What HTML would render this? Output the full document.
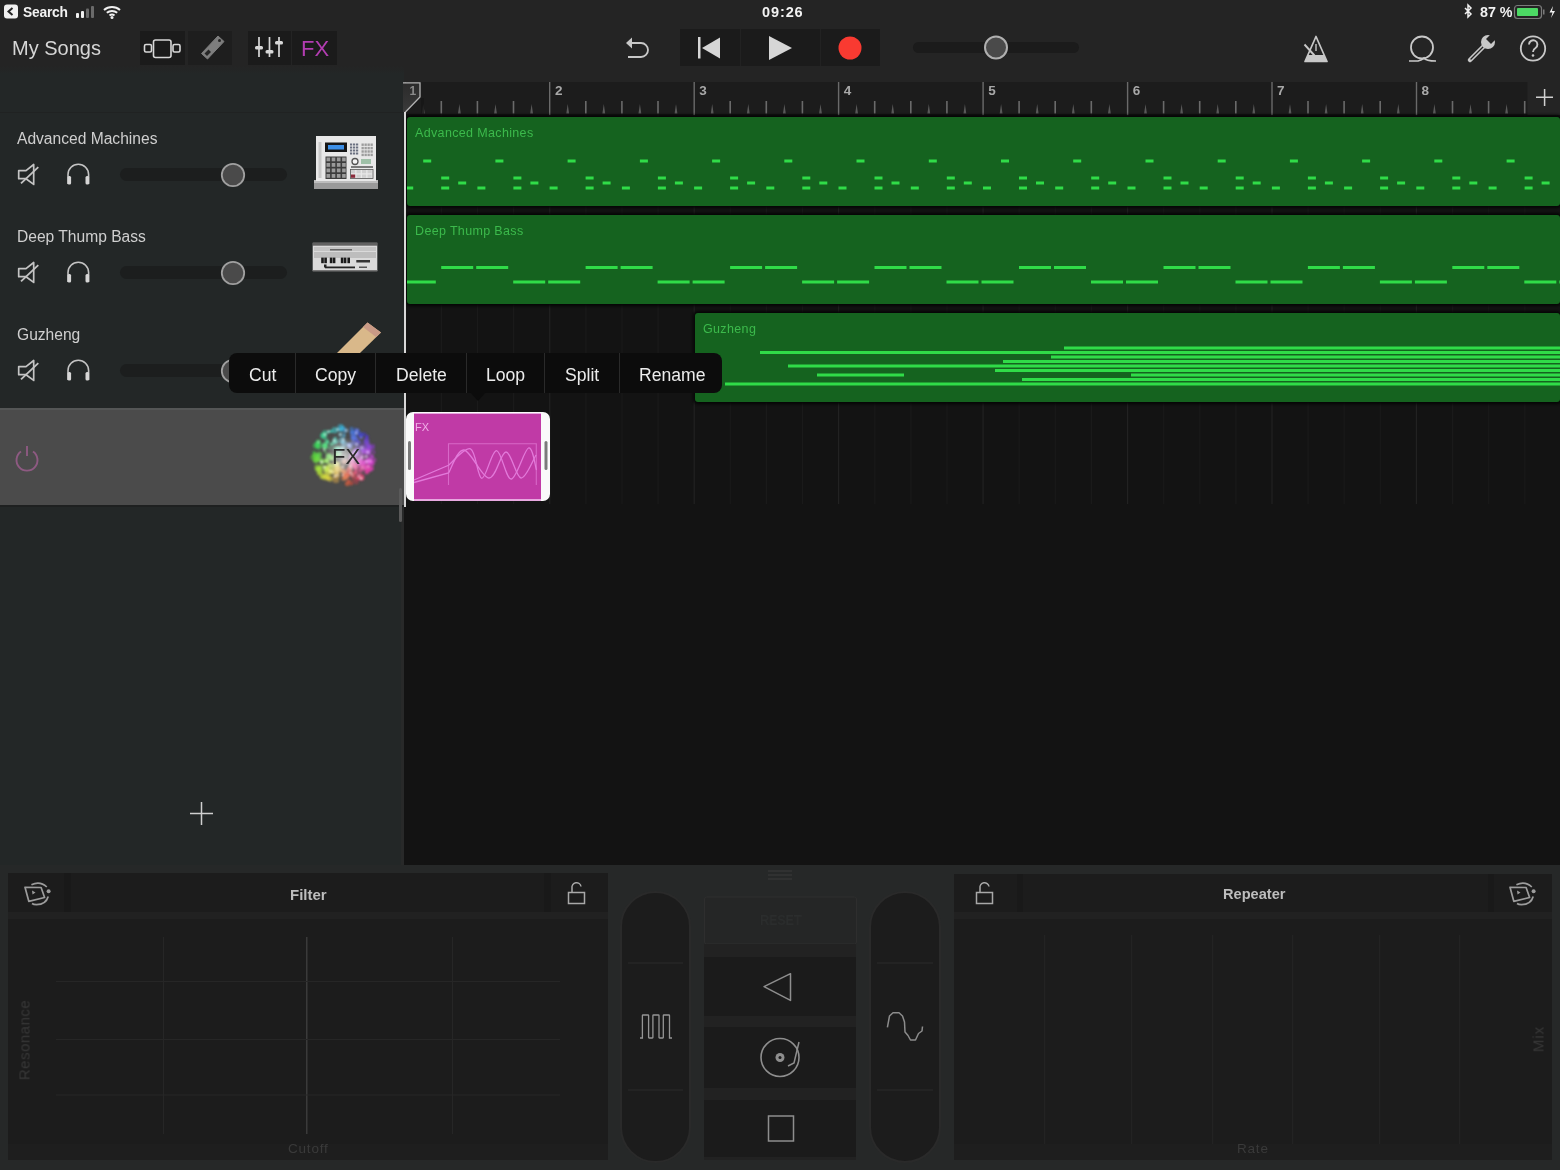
<!DOCTYPE html>
<html><head><meta charset="utf-8">
<style>
*{margin:0;padding:0;box-sizing:border-box}
html,body{width:1560px;height:1170px;overflow:hidden;background:#131313;font-family:"Liberation Sans",sans-serif}
.a{position:absolute}
.t{position:absolute;white-space:nowrap;line-height:1;will-change:transform}
svg{position:absolute;overflow:visible;will-change:transform}
</style></head><body>

<div class="a" style="left:0;top:0;width:1560px;height:82px;background:#242424"></div>
<svg style="left:0;top:0" width="1560" height="24"><rect x="4" y="4.5" width="14" height="14" rx="3" fill="#f0f0f0"/><path d="M12.5 8 L8.5 11.5 L12.5 15" stroke="#242424" stroke-width="2" fill="none"/><rect x="76" y="13" width="3" height="5" rx="1" fill="#f0f0f0"/><rect x="81" y="11" width="3" height="7" rx="1" fill="#f0f0f0"/><rect x="86" y="8.5" width="3" height="9.5" rx="1" fill="#6a6a6a"/><rect x="91" y="6" width="3" height="12" rx="1" fill="#6a6a6a"/><path d="M104 10 A12 12 0 0 1 120 10" stroke="#f0f0f0" stroke-width="2" fill="none"/><path d="M106.8 12.8 A8 8 0 0 1 117.2 12.8" stroke="#f0f0f0" stroke-width="2" fill="none"/><path d="M109.5 15.5 A4 4 0 0 1 114.5 15.5" stroke="#f0f0f0" stroke-width="2" fill="none"/><circle cx="112" cy="17.5" r="1.5" fill="#f0f0f0"/><path d="M1465 8 L1471 14 L1468 17 L1468 5 L1471 8 L1465 14" stroke="#f0f0f0" stroke-width="1.5" fill="none"/><rect x="1514.5" y="5.5" width="27" height="13" rx="3" stroke="#7a7a7a" stroke-width="1.2" fill="none"/><rect x="1517" y="8" width="21" height="8" rx="1" fill="#4cd964"/><rect x="1543" y="9.5" width="1.5" height="5" fill="#7a7a7a"/><path d="M1553 6 L1549.5 12.5 L1552.5 12.5 L1551 18 L1555 11 L1552 11 Z" fill="#f0f0f0"/></svg>
<div class="t" style="left:23px;top:5.5px;font-size:13.8px;font-weight:bold;letter-spacing:-0.2px;color:#f2f2f2">Search</div>
<div class="t" style="left:762px;top:5px;font-size:14.5px;font-weight:bold;letter-spacing:0.9px;color:#f2f2f2">09:26</div>
<div class="t" style="left:1480px;top:4.8px;font-size:14.3px;font-weight:bold;letter-spacing:0px;color:#f2f2f2">87 %</div>
<div class="t" style="left:11.8px;top:38.2px;font-size:20px;color:#d6d6d6">My Songs</div>
<div class="a" style="left:140px;top:31px;width:45px;height:34px;background:#1b1b1b"></div>
<div class="a" style="left:188px;top:31px;width:44px;height:34px;background:#1e1e1e"></div>
<div class="a" style="left:248px;top:31px;width:43px;height:34px;background:#1b1b1b"></div>
<div class="a" style="left:292px;top:31px;width:45px;height:34px;background:#1b1b1b"></div>
<div class="a" style="left:680px;top:29px;width:200px;height:37px;background:#1b1b1b"></div>
<svg style="left:0;top:0" width="1560" height="82"><rect x="153.5" y="40" width="17.5" height="17.5" rx="2" stroke="#d8d8d8" stroke-width="1.6" fill="none"/><rect x="144.5" y="44.5" width="7" height="7.5" rx="1.5" stroke="#d8d8d8" stroke-width="1.6" fill="none"/><rect x="173" y="44.5" width="7" height="7.5" rx="1.5" stroke="#d8d8d8" stroke-width="1.6" fill="none"/><path d="M201.5 53.5 L218 36 L224 41.5 L207.5 59 Z" fill="#7e7e7e" stroke="#7e7e7e" stroke-width="1" stroke-linejoin="round"/><path d="M204.5 53.5 L208.5 49.5 L211 52 L207 56 Z" fill="#262626"/><circle cx="219.5" cy="40.5" r="1.5" fill="#262626"/><path d="M259 37 V57 M269.5 37 V57 M279 37 V57" stroke="#d8d8d8" stroke-width="1.7"/><rect x="255" y="46" width="8" height="3.5" rx="1.5" fill="#d8d8d8"/><rect x="265.5" y="50" width="8" height="3.5" rx="1.5" fill="#d8d8d8"/><rect x="275" y="41" width="8" height="3.5" rx="1.5" fill="#d8d8d8"/><path d="M631 43 H641 A7 7 0 0 1 641 57 H628" stroke="#c8c8c8" stroke-width="1.8" fill="none"/><path d="M626 43 L632 37.5 L632 48.5 Z" fill="#c8c8c8"/><rect x="698" y="37" width="2.5" height="21.5" fill="#d6d6d6"/><path d="M720 37.5 L702 48 L720 58.5 Z" fill="#d6d6d6"/><path d="M769 36 L792 48 L769 60 Z" fill="#d6d6d6"/><circle cx="850" cy="48" r="11.5" fill="#f93a31"/><rect x="913" y="42" width="166" height="11" rx="5.5" fill="#1b1b1b"/><circle cx="996" cy="47.5" r="11" fill="#4a4a4a" stroke="#b0b0b0" stroke-width="2"/><path d="M1305 61.5 L1316 36.5 L1327 61.5 Z" stroke="#c8c8c8" stroke-width="1.7" fill="none" stroke-linejoin="round"/><path d="M1307.8 55 L1324.2 55 L1327 61.5 L1305 61.5 Z" fill="#c8c8c8"/><path d="M1304.5 44.5 L1314.5 55.5" stroke="#c8c8c8" stroke-width="1.9"/><path d="M1316 44 V51" stroke="#c8c8c8" stroke-width="1.4"/><circle cx="1422" cy="47.5" r="11" stroke="#c8c8c8" stroke-width="1.8" fill="none"/><path d="M1409 61 H1418 Q1422 60 1424 58 Q1426 61 1436 61" stroke="#c8c8c8" stroke-width="1.6" fill="none"/><path d="M1470 60 L1484 46" stroke="#c8c8c8" stroke-width="4.5" stroke-linecap="round"/><path d="M1471 59 L1484 46" stroke="#242424" stroke-width="1.4" stroke-linecap="round"/><circle cx="1488" cy="42" r="7" fill="#c8c8c8"/><path d="M1492 33 L1497 38 L1491 44 L1486 39 Z" fill="#242424"/><circle cx="1533" cy="48.5" r="12.2" stroke="#c8c8c8" stroke-width="1.8" fill="none"/><path d="M1529 44.5 A4.2 4.2 0 1 1 1535.5 48 Q1533 49.5 1533 52" stroke="#c8c8c8" stroke-width="1.9" fill="none"/><circle cx="1533" cy="55.5" r="1.3" fill="#c8c8c8"/></svg>
<div class="t" style="left:301px;top:38px;font-size:22px;color:#b33db2">FX</div>
<div class="a" style="left:739.5px;top:29px;width:1px;height:37px;background:#222"></div><div class="a" style="left:819.5px;top:29px;width:1px;height:37px;background:#222"></div>
<div class="a" style="left:0;top:69px;width:404px;height:796px;background:#232727"></div>
<div class="a" style="left:0;top:112px;width:404px;height:1px;background:#202222"></div>
<div class="a" style="left:0;top:66px;width:404px;height:8px;background:linear-gradient(#242424,#232727)"></div>
<div class="a" style="left:0;top:408px;width:404px;height:97px;background:#4b4b4b"></div>
<div class="a" style="left:400.5px;top:505px;width:3.5px;height:360px;background:#282929"></div>
<div class="a" style="left:0;top:408px;width:404px;height:2px;background:#545656"></div>
<div class="a" style="left:0;top:505px;width:404px;height:2px;background:#1e2020"></div>
<div class="t" style="left:17px;top:131.4px;font-size:15.6px;color:#cfcfcf">Advanced Machines</div>
<svg style="left:0;top:114px" width="400" height="98"><path d="M18.7 56.6 H26 L33.7 50.5 V70.4 L26 64.7 H18.7 Z" stroke="#c4c4c4" stroke-width="1.7" fill="none" stroke-linejoin="round"/><path d="M21 69.3 L38.3 53.1" stroke="#c4c4c4" stroke-width="1.8"/><path d="M68 70 V60.5 A10.3 10.3 0 0 1 88.6 60.5 V70" stroke="#c4c4c4" stroke-width="1.6" fill="none"/><rect x="67.5" y="62" width="3.6" height="8.5" rx="1.5" fill="#d6d6d6"/><rect x="85.5" y="62" width="3.6" height="8.5" rx="1.5" fill="#d6d6d6"/><rect x="120" y="54" width="167" height="13" rx="6.5" fill="#1c1e1e"/><circle cx="233" cy="61" r="11.2" fill="#4a4a4a" stroke="#a0a0a0" stroke-width="1.8"/></svg>
<div class="t" style="left:17px;top:229.4px;font-size:15.6px;color:#cfcfcf">Deep Thump Bass</div>
<svg style="left:0;top:212px" width="400" height="98"><path d="M18.7 56.6 H26 L33.7 50.5 V70.4 L26 64.7 H18.7 Z" stroke="#c4c4c4" stroke-width="1.7" fill="none" stroke-linejoin="round"/><path d="M21 69.3 L38.3 53.1" stroke="#c4c4c4" stroke-width="1.8"/><path d="M68 70 V60.5 A10.3 10.3 0 0 1 88.6 60.5 V70" stroke="#c4c4c4" stroke-width="1.6" fill="none"/><rect x="67.5" y="62" width="3.6" height="8.5" rx="1.5" fill="#d6d6d6"/><rect x="85.5" y="62" width="3.6" height="8.5" rx="1.5" fill="#d6d6d6"/><rect x="120" y="54" width="167" height="13" rx="6.5" fill="#1c1e1e"/><circle cx="233" cy="61" r="11.2" fill="#4a4a4a" stroke="#a0a0a0" stroke-width="1.8"/></svg>
<div class="t" style="left:17px;top:327.4px;font-size:15.6px;color:#cfcfcf">Guzheng</div>
<svg style="left:0;top:310px" width="400" height="98"><path d="M18.7 56.6 H26 L33.7 50.5 V70.4 L26 64.7 H18.7 Z" stroke="#c4c4c4" stroke-width="1.7" fill="none" stroke-linejoin="round"/><path d="M21 69.3 L38.3 53.1" stroke="#c4c4c4" stroke-width="1.8"/><path d="M68 70 V60.5 A10.3 10.3 0 0 1 88.6 60.5 V70" stroke="#c4c4c4" stroke-width="1.6" fill="none"/><rect x="67.5" y="62" width="3.6" height="8.5" rx="1.5" fill="#d6d6d6"/><rect x="85.5" y="62" width="3.6" height="8.5" rx="1.5" fill="#d6d6d6"/><rect x="120" y="54" width="167" height="13" rx="6.5" fill="#1c1e1e"/><circle cx="233" cy="61" r="11.2" fill="#4a4a4a" stroke="#a0a0a0" stroke-width="1.8"/></svg>
<svg style="left:300px;top:120px" width="100" height="80"><rect x="14" y="60" width="64" height="9" fill="#9a9a9a"/><rect x="14" y="60" width="64" height="3" fill="#bdbdbd"/><rect x="16" y="16" width="60" height="45" fill="#e8e8e8"/><rect x="25" y="22.5" width="22" height="9.5" fill="#151515"/><rect x="28" y="25" width="16" height="4.5" fill="#3d8fe6"/><rect x="25.5" y="36.5" width="21" height="22.5" fill="#3c3c3c"/><rect x="26.5" y="37.5" width="3.6" height="3.8" fill="#9a9a9a"/><rect x="31.7" y="37.5" width="3.6" height="3.8" fill="#9a9a9a"/><rect x="36.9" y="37.5" width="3.6" height="3.8" fill="#9a9a9a"/><rect x="42.1" y="37.5" width="3.6" height="3.8" fill="#9a9a9a"/><rect x="26.5" y="43.0" width="3.6" height="3.8" fill="#9a9a9a"/><rect x="31.7" y="43.0" width="3.6" height="3.8" fill="#9a9a9a"/><rect x="36.9" y="43.0" width="3.6" height="3.8" fill="#9a9a9a"/><rect x="42.1" y="43.0" width="3.6" height="3.8" fill="#9a9a9a"/><rect x="26.5" y="48.5" width="3.6" height="3.8" fill="#9a9a9a"/><rect x="31.7" y="48.5" width="3.6" height="3.8" fill="#9a9a9a"/><rect x="36.9" y="48.5" width="3.6" height="3.8" fill="#9a9a9a"/><rect x="42.1" y="48.5" width="3.6" height="3.8" fill="#9a9a9a"/><rect x="26.5" y="54.0" width="3.6" height="3.8" fill="#9a9a9a"/><rect x="31.7" y="54.0" width="3.6" height="3.8" fill="#9a9a9a"/><rect x="36.9" y="54.0" width="3.6" height="3.8" fill="#9a9a9a"/><rect x="42.1" y="54.0" width="3.6" height="3.8" fill="#9a9a9a"/><rect x="50.0" y="23.5" width="2.2" height="2" fill="#6a7080"/><rect x="53.0" y="23.5" width="2.2" height="2" fill="#6a7080"/><rect x="56.0" y="23.5" width="2.2" height="2" fill="#6a7080"/><rect x="50.0" y="26.5" width="2.2" height="2" fill="#6a7080"/><rect x="53.0" y="26.5" width="2.2" height="2" fill="#6a7080"/><rect x="56.0" y="26.5" width="2.2" height="2" fill="#6a7080"/><rect x="50.0" y="29.5" width="2.2" height="2" fill="#6a7080"/><rect x="53.0" y="29.5" width="2.2" height="2" fill="#6a7080"/><rect x="56.0" y="29.5" width="2.2" height="2" fill="#6a7080"/><rect x="50.0" y="32.5" width="2.2" height="2" fill="#6a7080"/><rect x="53.0" y="32.5" width="2.2" height="2" fill="#6a7080"/><rect x="56.0" y="32.5" width="2.2" height="2" fill="#6a7080"/><rect x="61.5" y="23.5" width="2.3" height="2.4" fill="#9c9c9c"/><rect x="64.5" y="23.5" width="2.3" height="2.4" fill="#9c9c9c"/><rect x="67.5" y="23.5" width="2.3" height="2.4" fill="#9c9c9c"/><rect x="70.5" y="23.5" width="2.3" height="2.4" fill="#9c9c9c"/><rect x="61.5" y="26.9" width="2.3" height="2.4" fill="#9c9c9c"/><rect x="64.5" y="26.9" width="2.3" height="2.4" fill="#9c9c9c"/><rect x="67.5" y="26.9" width="2.3" height="2.4" fill="#9c9c9c"/><rect x="70.5" y="26.9" width="2.3" height="2.4" fill="#9c9c9c"/><rect x="61.5" y="30.3" width="2.3" height="2.4" fill="#9c9c9c"/><rect x="64.5" y="30.3" width="2.3" height="2.4" fill="#9c9c9c"/><rect x="67.5" y="30.3" width="2.3" height="2.4" fill="#9c9c9c"/><rect x="70.5" y="30.3" width="2.3" height="2.4" fill="#9c9c9c"/><rect x="61.5" y="33.7" width="2.3" height="2.4" fill="#9c9c9c"/><rect x="64.5" y="33.7" width="2.3" height="2.4" fill="#9c9c9c"/><rect x="67.5" y="33.7" width="2.3" height="2.4" fill="#9c9c9c"/><rect x="70.5" y="33.7" width="2.3" height="2.4" fill="#9c9c9c"/><circle cx="55" cy="41.5" r="3" fill="#f4f4f4" stroke="#555" stroke-width="1.3"/><rect x="61" y="39" width="10" height="5" fill="#9fc0a8"/><rect x="51" y="46" width="22" height="2" fill="#7a7a7a"/><rect x="51.0" y="50.0" width="4.2" height="3.3" fill="#d0d0d0"/><rect x="56.5" y="50.0" width="4.2" height="3.3" fill="#d0d0d0"/><rect x="62.0" y="50.0" width="4.2" height="3.3" fill="#d0d0d0"/><rect x="67.5" y="50.0" width="4.2" height="3.3" fill="#d0d0d0"/><rect x="51.0" y="54.5" width="4.2" height="3.3" fill="#8a2a3a"/><rect x="56.5" y="54.5" width="4.2" height="3.3" fill="#d0d0d0"/><rect x="62.0" y="54.5" width="4.2" height="3.3" fill="#d0d0d0"/><rect x="67.5" y="54.5" width="4.2" height="3.3" fill="#d0d0d0"/><rect x="50.5" y="49.5" width="22.5" height="9" fill="none" stroke="#555" stroke-width=".8"/><rect x="18.5" y="22" width="3" height="36" fill="#c8c8c8"/></svg>
<svg style="left:300px;top:230px" width="90" height="50"><rect x="12.7" y="12.7" width="64.6" height="28.2" fill="#dadada"/><rect x="12.7" y="12.7" width="64.6" height="3" fill="#111" opacity=".6"/><rect x="14" y="17" width="62" height="4" fill="#c4c4c4"/><rect x="30" y="19" width="22" height="1.5" fill="#666"/><rect x="14" y="22" width="62" height="6" fill="#bdbdbd"/><rect x="21.2" y="27.6" width="2.6" height="5.6" fill="#1a1a1a"/><rect x="24.3" y="27.6" width="2.6" height="5.6" fill="#1a1a1a"/><rect x="29.8" y="27.6" width="2.6" height="5.6" fill="#1a1a1a"/><rect x="32.8" y="27.6" width="2.6" height="5.6" fill="#1a1a1a"/><rect x="40.8" y="27.6" width="2.6" height="5.6" fill="#1a1a1a"/><rect x="43.8" y="27.6" width="2.6" height="5.6" fill="#1a1a1a"/><rect x="47.4" y="27.6" width="2.6" height="5.6" fill="#1a1a1a"/><rect x="56.3" y="30" width="13.7" height="2.5" fill="#333"/><rect x="25" y="36.5" width="30" height="1.8" fill="#222"/><rect x="24" y="34.5" width="2.5" height="3" fill="#222"/><rect x="59" y="36.5" width="8" height="1.5" fill="#555"/><rect x="12.7" y="40" width="64.6" height="1.5" fill="#777"/></svg>
<svg style="left:0;top:0" width="400" height="400"><path d="M337 353 L367.5 322.5 L381 332.5 L360 353 Z" fill="#d9b88a"/><path d="M367.5 322.5 L381 332.5 L376 337 L363 327 Z" fill="#c99a86"/></svg>
<svg style="left:0;top:408px" width="400" height="97"><path d="M21 43.5 A10.5 10.5 0 1 0 33 43.5" stroke="#8e5a82" stroke-width="1.9" fill="none"/><path d="M27 38 V48" stroke="#8e5a82" stroke-width="1.9"/></svg>
<svg style="left:300px;top:415px" width="90" height="80"><defs><filter id="bl" x="-50%" y="-50%" width="200%" height="200%"><feGaussianBlur stdDeviation="1.1"/></filter><radialGradient id="glow"><stop offset="0" stop-color="#fff" stop-opacity=".7"/><stop offset=".55" stop-color="#fff" stop-opacity=".3"/><stop offset="1" stop-color="#fff" stop-opacity="0"/></radialGradient></defs><g filter="url(#bl)"><circle cx="38.3" cy="51.6" r="2.5" fill="hsl(48,75%,72.11947508882305%)" opacity="0.41"/><circle cx="38.3" cy="51.6" r="1" fill="#fff" opacity=".8"/><circle cx="25.2" cy="37.0" r="1.3" fill="hsl(122,75%,66.16146049865587%)" opacity="0.60"/><circle cx="64.3" cy="45.5" r="1.3" fill="hsl(303,75%,64.65517899899652%)" opacity="0.42"/><circle cx="18.6" cy="53.1" r="1.4" fill="hsl(85,75%,57.574728305801656%)" opacity="0.48"/><circle cx="22.8" cy="20.7" r="2.4" fill="hsl(154,75%,55.75282746549286%)" opacity="0.55"/><circle cx="51.9" cy="39.9" r="2.9" fill="hsl(282,75%,76.5694876548422%)" opacity="0.51"/><circle cx="51.9" cy="39.9" r="1" fill="#fff" opacity=".8"/><circle cx="51.1" cy="49.4" r="1.8" fill="hsl(340,75%,73.32751168754777%)" opacity="0.73"/><circle cx="54.1" cy="61.2" r="2.5" fill="hsl(353,75%,61.725278388107036%)" opacity="0.54"/><circle cx="35.5" cy="38.6" r="1.3" fill="hsl(126,75%,75.71933472518582%)" opacity="0.47"/><circle cx="35.2" cy="23.6" r="1.8" fill="hsl(173,75%,64.78456280782015%)" opacity="0.63"/><circle cx="27.2" cy="45.7" r="2.8" fill="hsl(94,75%,67.75555591978876%)" opacity="0.68"/><circle cx="27.2" cy="45.7" r="1" fill="#fff" opacity=".8"/><circle cx="44.9" cy="63.1" r="2.3" fill="hsl(18,75%,61.85844329047771%)" opacity="0.75"/><circle cx="41.8" cy="25.2" r="3.2" fill="hsl(192,75%,68.05846472051095%)" opacity="0.43"/><circle cx="20.2" cy="53.5" r="1.5" fill="hsl(82,75%,58.68517408060867%)" opacity="0.59"/><circle cx="69.0" cy="46.8" r="2.7" fill="hsl(303,75%,60.17668904961953%)" opacity="0.63"/><circle cx="56.7" cy="29.3" r="2.6" fill="hsl(247,75%,67.40468665137219%)" opacity="0.64"/><circle cx="56.7" cy="29.3" r="1" fill="#fff" opacity=".8"/><circle cx="25.2" cy="31.5" r="2.9" fill="hsl(137,75%,64.18043113607163%)" opacity="0.78"/><circle cx="18.7" cy="44.8" r="1.3" fill="hsl(101,75%,60.24708513238602%)" opacity="0.68"/><circle cx="25.2" cy="17.9" r="2.8" fill="hsl(161,75%,55.09827321093754%)" opacity="0.50"/><circle cx="24.6" cy="56.7" r="1.2" fill="hsl(71,75%,60.169133557979265%)" opacity="0.58"/><circle cx="49.7" cy="50.3" r="1.3" fill="hsl(349,75%,73.35443698548762%)" opacity="0.71"/><circle cx="49.7" cy="50.3" r="1" fill="#fff" opacity=".8"/><circle cx="55.0" cy="51.8" r="2.0" fill="hsl(334,75%,69.1373221243168%)" opacity="0.75"/><circle cx="62.6" cy="50.5" r="2.3" fill="hsl(317,75%,64.32688961769341%)" opacity="0.76"/><circle cx="56.3" cy="16.5" r="1.8" fill="hsl(227,75%,57.0018756163299%)" opacity="0.56"/><circle cx="25.4" cy="62.2" r="3.1" fill="hsl(61,75%,56.695164451690495%)" opacity="0.45"/><circle cx="51.0" cy="53.9" r="1.7" fill="hsl(352,75%,69.57799561450194%)" opacity="0.59"/><circle cx="51.0" cy="53.9" r="1" fill="#fff" opacity=".8"/><circle cx="30.0" cy="32.9" r="1.2" fill="hsl(140,75%,68.72353088264605%)" opacity="0.56"/><circle cx="27.8" cy="57.1" r="3.1" fill="hsl(65,75%,62.009385871369254%)" opacity="0.68"/><circle cx="19.4" cy="38.8" r="2.6" fill="hsl(115,75%,61.069069094168576%)" opacity="0.41"/><circle cx="66.4" cy="25.8" r="2.9" fill="hsl(256,75%,58.31624531245225%)" opacity="0.72"/><circle cx="28.3" cy="52.6" r="1.4" fill="hsl(73,75%,65.40832514210399%)" opacity="0.65"/><circle cx="28.3" cy="52.6" r="1" fill="#fff" opacity=".8"/><circle cx="52.5" cy="44.2" r="1.6" fill="hsl(311,75%,75.49549777908759%)" opacity="0.45"/><circle cx="39.5" cy="47.5" r="1.2" fill="hsl(54,75%,76.24424334998318%)" opacity="0.45"/><circle cx="59.4" cy="51.6" r="1.3" fill="hsl(324,75%,66.20955240747291%)" opacity="0.75"/><circle cx="34.4" cy="33.2" r="1.7" fill="hsl(149,75%,72.19947717259892%)" opacity="0.53"/><circle cx="36.3" cy="49.2" r="2.9" fill="hsl(63,75%,73.13426901908639%)" opacity="0.80"/><circle cx="36.3" cy="49.2" r="1" fill="#fff" opacity=".8"/><circle cx="22.5" cy="45.3" r="1.4" fill="hsl(99,75%,63.61405270473896%)" opacity="0.43"/><circle cx="34.9" cy="53.8" r="2.9" fill="hsl(55,75%,68.669398739271%)" opacity="0.45"/><circle cx="74.2" cy="45.1" r="2.3" fill="hsl(298,75%,55.70506601082322%)" opacity="0.44"/><circle cx="37.5" cy="39.3" r="2.3" fill="hsl(124,75%,77.74637060737344%)" opacity="0.80"/><circle cx="61.1" cy="22.6" r="1.7" fill="hsl(243,75%,59.69750080733481%)" opacity="0.54"/><circle cx="61.1" cy="22.6" r="1" fill="#fff" opacity=".8"/><circle cx="57.7" cy="63.2" r="2.3" fill="hsl(348,75%,58.445435136813884%)" opacity="0.71"/><circle cx="36.7" cy="53.4" r="2.8" fill="hsl(51,75%,69.8350260805682%)" opacity="0.80"/><circle cx="60.9" cy="20.1" r="2.8" fill="hsl(239,75%,57.900692576073%)" opacity="0.70"/><circle cx="47.3" cy="61.8" r="1.9" fill="hsl(11,75%,62.94180720605369%)" opacity="0.39"/><circle cx="60.7" cy="43.7" r="1.7" fill="hsl(299,75%,68.28022991537632%)" opacity="0.68"/><circle cx="60.7" cy="43.7" r="1" fill="#fff" opacity=".8"/><circle cx="64.4" cy="35.7" r="3.1" fill="hsl(275,75%,64.36798259317759%)" opacity="0.80"/><circle cx="62.5" cy="36.0" r="1.6" fill="hsl(275,75%,66.18580330192958%)" opacity="0.48"/><circle cx="48.8" cy="53.9" r="2.4" fill="hsl(359,75%,70.38895894705341%)" opacity="0.77"/><circle cx="55.8" cy="23.9" r="2.5" fill="hsl(235,75%,63.70240387493547%)" opacity="0.72"/><circle cx="66.0" cy="53.0" r="3.0" fill="hsl(319,75%,60.30904220623679%)" opacity="0.71"/><circle cx="66.0" cy="53.0" r="1" fill="#fff" opacity=".8"/><circle cx="44.0" cy="20.7" r="1.6" fill="hsl(200,75%,63.731674281295874%)" opacity="0.72"/><circle cx="30.1" cy="63.6" r="3.1" fill="hsl(52,75%,57.98379795179022%)" opacity="0.55"/><circle cx="19.2" cy="57.4" r="2.6" fill="hsl(77,75%,55.76613457586377%)" opacity="0.45"/><circle cx="53.0" cy="49.5" r="3.0" fill="hsl(334,75%,72.10902088806745%)" opacity="0.73"/><circle cx="61.3" cy="62.0" r="3.2" fill="hsl(340,75%,57.58005665806503%)" opacity="0.66"/><circle cx="61.3" cy="62.0" r="1" fill="#fff" opacity=".8"/><circle cx="30.2" cy="58.5" r="1.5" fill="hsl(58,75%,62.343254282948614%)" opacity="0.39"/><circle cx="69.0" cy="36.7" r="2.3" fill="hsl(280,75%,60.499598529987246%)" opacity="0.78"/><circle cx="17.2" cy="52.0" r="2.9" fill="hsl(88,75%,56.883711788109586%)" opacity="0.47"/><circle cx="43.8" cy="57.1" r="1.7" fill="hsl(21,75%,67.9289933172268%)" opacity="0.63"/><circle cx="42.8" cy="60.0" r="1.5" fill="hsl(24,75%,64.96945177538913%)" opacity="0.77"/><circle cx="42.8" cy="60.0" r="1" fill="#fff" opacity=".8"/><circle cx="31.0" cy="56.8" r="2.4" fill="hsl(60,75%,64.13981062954652%)" opacity="0.77"/><circle cx="17.6" cy="54.3" r="2.2" fill="hsl(83,75%,56.1937531606019%)" opacity="0.61"/><circle cx="37.9" cy="40.2" r="2.1" fill="hsl(118,75%,78.3223087411969%)" opacity="0.46"/><circle cx="72.1" cy="41.6" r="1.5" fill="hsl(291,75%,58.009996116070326%)" opacity="0.58"/><circle cx="40.3" cy="19.5" r="1.9" fill="hsl(190,75%,62.19504458771112%)" opacity="0.60"/><circle cx="40.3" cy="19.5" r="1" fill="#fff" opacity=".8"/><circle cx="17.9" cy="32.2" r="1.4" fill="hsl(129,75%,58.247297447710125%)" opacity="0.62"/><circle cx="44.2" cy="56.7" r="2.7" fill="hsl(19,75%,68.34594266218295%)" opacity="0.60"/><circle cx="18.6" cy="31.4" r="3.0" fill="hsl(131,75%,58.6387865381043%)" opacity="0.57"/><circle cx="26.9" cy="27.5" r="2.2" fill="hsl(148,75%,63.179654676615954%)" opacity="0.68"/><circle cx="22.0" cy="47.3" r="2.2" fill="hsl(94,75%,62.6378092896819%)" opacity="0.78"/><circle cx="22.0" cy="47.3" r="1" fill="#fff" opacity=".8"/><circle cx="34.8" cy="15.2" r="3.1" fill="hsl(180,75%,56.81097623352524%)" opacity="0.49"/><circle cx="15.7" cy="30.7" r="2.9" fill="hsl(130,75%,55.817703711492335%)" opacity="0.44"/><circle cx="59.2" cy="54.5" r="1.3" fill="hsl(332,75%,64.47553109571157%)" opacity="0.48"/><circle cx="67.1" cy="51.6" r="2.8" fill="hsl(315,75%,60.1549679656011%)" opacity="0.76"/><circle cx="59.0" cy="61.3" r="2.5" fill="hsl(344,75%,59.36198699171592%)" opacity="0.44"/><circle cx="59.0" cy="61.3" r="1" fill="#fff" opacity=".8"/><circle cx="66.8" cy="21.8" r="1.6" fill="hsl(250,75%,55.46491529751523%)" opacity="0.79"/><circle cx="26.3" cy="53.2" r="3.2" fill="hsl(75,75%,63.544912966892966%)" opacity="0.74"/><circle cx="55.0" cy="57.4" r="2.2" fill="hsl(346,75%,64.70047534374761%)" opacity="0.53"/><circle cx="50.0" cy="56.8" r="2.6" fill="hsl(359,75%,67.28646049118977%)" opacity="0.39"/><circle cx="24.2" cy="34.5" r="1.2" fill="hsl(128,75%,64.51059882028822%)" opacity="0.52"/><circle cx="24.2" cy="34.5" r="1" fill="#fff" opacity=".8"/><circle cx="27.9" cy="26.3" r="1.3" fill="hsl(152,75%,63.04728347900705%)" opacity="0.80"/><circle cx="51.4" cy="13.2" r="1.4" fill="hsl(215,75%,55.40502884775462%)" opacity="0.50"/><circle cx="70.9" cy="47.3" r="1.7" fill="hsl(303,75%,58.33184654258598%)" opacity="0.44"/><circle cx="17.6" cy="54.0" r="2.8" fill="hsl(84,75%,56.28738483971232%)" opacity="0.49"/><circle cx="61.8" cy="63.4" r="2.3" fill="hsl(342,75%,56.17226610222759%)" opacity="0.68"/><circle cx="61.8" cy="63.4" r="1" fill="#fff" opacity=".8"/><circle cx="51.3" cy="45.3" r="2.6" fill="hsl(320,75%,75.98550057560803%)" opacity="0.56"/><circle cx="71.3" cy="53.4" r="2.5" fill="hsl(314,75%,55.88969827275557%)" opacity="0.72"/><circle cx="69.1" cy="54.5" r="1.3" fill="hsl(318,75%,57.12051865222847%)" opacity="0.75"/><circle cx="26.2" cy="45.9" r="2.3" fill="hsl(95,75%,66.78540991477138%)" opacity="0.78"/><circle cx="42.7" cy="52.0" r="2.3" fill="hsl(27,75%,72.89484373915738%)" opacity="0.48"/><circle cx="42.7" cy="52.0" r="1" fill="#fff" opacity=".8"/><circle cx="54.2" cy="48.8" r="1.3" fill="hsl(327,75%,71.75732413592031%)" opacity="0.47"/><circle cx="37.3" cy="56.2" r="2.7" fill="hsl(44,75%,67.62320700429717%)" opacity="0.51"/><circle cx="30.2" cy="41.0" r="1.9" fill="hsl(110,75%,71.21557484395127%)" opacity="0.39"/><circle cx="44.0" cy="46.4" r="2.7" fill="hsl(20,75%,78.57155979271411%)" opacity="0.62"/><circle cx="52.1" cy="59.8" r="3.1" fill="hsl(357,75%,63.79831138113583%)" opacity="0.43"/><circle cx="52.1" cy="59.8" r="1" fill="#fff" opacity=".8"/><circle cx="52.8" cy="23.5" r="2.2" fill="hsl(227,75%,64.6864782431634%)" opacity="0.74"/><circle cx="26.4" cy="54.0" r="2.6" fill="hsl(74,75%,63.157245190540564%)" opacity="0.80"/><circle cx="28.3" cy="63.1" r="2.6" fill="hsl(55,75%,57.490116499167826%)" opacity="0.65"/><circle cx="28.5" cy="50.8" r="1.3" fill="hsl(78,75%,66.58547859284272%)" opacity="0.44"/><circle cx="68.4" cy="51.8" r="1.7" fill="hsl(314,75%,58.951126585045685%)" opacity="0.45"/><circle cx="68.4" cy="51.8" r="1" fill="#fff" opacity=".8"/><circle cx="68.8" cy="54.5" r="2.9" fill="hsl(319,75%,57.35085236894514%)" opacity="0.67"/><circle cx="40.8" cy="55.4" r="1.8" fill="hsl(32,75%,69.28786025290924%)" opacity="0.58"/><circle cx="55.6" cy="57.4" r="1.7" fill="hsl(345,75%,64.39745614431422%)" opacity="0.79"/><circle cx="67.0" cy="37.3" r="1.7" fill="hsl(281,75%,62.37346691026687%)" opacity="0.79"/><circle cx="37.0" cy="57.4" r="1.2" fill="hsl(43,75%,66.37305095245954%)" opacity="0.54"/><circle cx="37.0" cy="57.4" r="1" fill="#fff" opacity=".8"/><circle cx="21.9" cy="44.3" r="1.6" fill="hsl(102,75%,63.234932247274%)" opacity="0.60"/><circle cx="60.5" cy="41.5" r="1.4" fill="hsl(292,75%,68.6852180079503%)" opacity="0.55"/><circle cx="50.2" cy="42.5" r="1.8" fill="hsl(304,75%,78.05363757832178%)" opacity="0.48"/><circle cx="24.3" cy="30.1" r="2.7" fill="hsl(139,75%,62.71696821615362%)" opacity="0.66"/><circle cx="37.8" cy="14.4" r="2.0" fill="hsl(187,75%,56.77227575017751%)" opacity="0.52"/><circle cx="37.8" cy="14.4" r="1" fill="#fff" opacity=".8"/><circle cx="56.7" cy="39.9" r="2.6" fill="hsl(285,75%,72.16764866234762%)" opacity="0.66"/><circle cx="71.6" cy="48.2" r="3.0" fill="hsl(305,75%,57.44347658780407%)" opacity="0.65"/><circle cx="41.1" cy="14.9" r="1.5" fill="hsl(194,75%,57.80392040873595%)" opacity="0.61"/><circle cx="15.3" cy="40.3" r="2.8" fill="hsl(111,75%,57.44893851916786%)" opacity="0.73"/><circle cx="18.4" cy="27.2" r="2.6" fill="hsl(138,75%,56.56512416374568%)" opacity="0.68"/><circle cx="18.4" cy="27.2" r="1" fill="#fff" opacity=".8"/><circle cx="44.9" cy="47.5" r="1.5" fill="hsl(12,75%,77.48065321084334%)" opacity="0.54"/><circle cx="66.7" cy="57.3" r="2.3" fill="hsl(326,75%,57.43522790515341%)" opacity="0.65"/><circle cx="25.8" cy="23.9" r="2.2" fill="hsl(153,75%,59.962325390290125%)" opacity="0.38"/><circle cx="52.0" cy="17.0" r="2.2" fill="hsl(218,75%,58.83007046432243%)" opacity="0.61"/><circle cx="39.1" cy="33.9" r="2.7" fill="hsl(165,75%,75.55859119630063%)" opacity="0.49"/><circle cx="39.1" cy="33.9" r="1" fill="#fff" opacity=".8"/><circle cx="58.8" cy="47.9" r="2.7" fill="hsl(315,75%,68.64787390720738%)" opacity="0.47"/><circle cx="42.0" cy="12.4" r="2.2" fill="hsl(196,75%,55.34687888104297%)" opacity="0.55"/><circle cx="18.2" cy="44.2" r="2.7" fill="hsl(103,75%,59.91039574737634%)" opacity="0.64"/><circle cx="37.9" cy="34.0" r="1.5" fill="hsl(159,75%,75.01831172828955%)" opacity="0.49"/><circle cx="43.2" cy="24.7" r="2.3" fill="hsl(197,75%,67.6380161116312%)" opacity="0.39"/><circle cx="43.2" cy="24.7" r="1" fill="#fff" opacity=".8"/><circle cx="59.5" cy="46.7" r="2.5" fill="hsl(310,75%,68.56182853741473%)" opacity="0.68"/><circle cx="36.2" cy="26.7" r="2.2" fill="hsl(171,75%,67.9831934396423%)" opacity="0.58"/><circle cx="32.7" cy="43.2" r="3.0" fill="hsl(99,75%,73.30010797337758%)" opacity="0.47"/><circle cx="74.0" cy="37.2" r="1.2" fill="hsl(283,75%,55.92043264707887%)" opacity="0.58"/><circle cx="57.1" cy="15.2" r="2.1" fill="hsl(227,75%,55.456779108771315%)" opacity="0.50"/><circle cx="57.1" cy="15.2" r="1" fill="#fff" opacity=".8"/><circle cx="51.6" cy="68.3" r="1.6" fill="hsl(4,75%,55.783796820422275%)" opacity="0.63"/><circle cx="58.4" cy="57.5" r="3.1" fill="hsl(339,75%,62.81641014904624%)" opacity="0.44"/><circle cx="53.6" cy="22.1" r="3.0" fill="hsl(227,75%,63.11658741033324%)" opacity="0.68"/><circle cx="47.5" cy="68.3" r="2.2" fill="hsl(13,75%,56.49198152901708%)" opacity="0.39"/><circle cx="66.2" cy="41.5" r="2.1" fill="hsl(291,75%,63.45575264177852%)" opacity="0.51"/><circle cx="66.2" cy="41.5" r="1" fill="#fff" opacity=".8"/><circle cx="55.9" cy="54.4" r="1.8" fill="hsl(338,75%,66.67068744920954%)" opacity="0.74"/><circle cx="71.2" cy="41.3" r="2.9" fill="hsl(291,75%,58.789685006875146%)" opacity="0.43"/><circle cx="67.8" cy="30.0" r="3.0" fill="hsl(265,75%,59.41382985378755%)" opacity="0.51"/><circle cx="30.2" cy="54.3" r="3.2" fill="hsl(66,75%,65.54356988227036%)" opacity="0.63"/><circle cx="30.7" cy="55.8" r="1.8" fill="hsl(62,75%,64.77469072705844%)" opacity="0.40"/><circle cx="30.7" cy="55.8" r="1" fill="#fff" opacity=".8"/><circle cx="67.0" cy="56.8" r="1.8" fill="hsl(325,75%,57.45299901042865%)" opacity="0.78"/><circle cx="44.1" cy="56.4" r="2.2" fill="hsl(20,75%,68.6433169146387%)" opacity="0.46"/><circle cx="22.6" cy="61.3" r="3.0" fill="hsl(67,75%,55.62972880100319%)" opacity="0.73"/><circle cx="23.6" cy="20.7" r="3.1" fill="hsl(155,75%,56.25751093419561%)" opacity="0.62"/><circle cx="42.4" cy="33.5" r="2.7" fill="hsl(188,75%,76.41072084663509%)" opacity="0.57"/><circle cx="42.4" cy="33.5" r="1" fill="#fff" opacity=".8"/><circle cx="44.4" cy="17.6" r="1.8" fill="hsl(201,75%,60.59067805952657%)" opacity="0.40"/><circle cx="54.7" cy="36.1" r="2.1" fill="hsl(265,75%,72.96607757708264%)" opacity="0.53"/><circle cx="36.0" cy="64.9" r="3.2" fill="hsl(38,75%,58.981690505395676%)" opacity="0.49"/><circle cx="34.2" cy="27.5" r="2.3" fill="hsl(164,75%,67.7284526135833%)" opacity="0.55"/><circle cx="50.6" cy="51.6" r="1.6" fill="hsl(348,75%,71.7503292105126%)" opacity="0.77"/><circle cx="50.6" cy="51.6" r="1" fill="#fff" opacity=".8"/><circle cx="28.8" cy="41.3" r="3.0" fill="hsl(109,75%,69.92305386958319%)" opacity="0.81"/><circle cx="32.2" cy="44.6" r="1.6" fill="hsl(93,75%,72.51643417629825%)" opacity="0.42"/><circle cx="38.3" cy="49.0" r="1.7" fill="hsl(55,75%,74.41364861054701%)" opacity="0.49"/><circle cx="17.2" cy="29.4" r="2.7" fill="hsl(133,75%,56.64904192440207%)" opacity="0.56"/><circle cx="24.4" cy="51.9" r="2.0" fill="hsl(81,75%,62.81441764094191%)" opacity="0.53"/><circle cx="24.4" cy="51.9" r="1" fill="#fff" opacity=".8"/><circle cx="59.7" cy="47.0" r="3.1" fill="hsl(311,75%,68.33017476636908%)" opacity="0.44"/><circle cx="19.0" cy="40.5" r="2.9" fill="hsl(111,75%,60.853814498710456%)" opacity="0.47"/><circle cx="41.9" cy="55.8" r="2.0" fill="hsl(28,75%,69.11408286123904%)" opacity="0.57"/><circle cx="71.7" cy="33.4" r="2.9" fill="hsl(275,75%,57.236440590317315%)" opacity="0.39"/><circle cx="69.9" cy="45.9" r="3.0" fill="hsl(301,75%,59.47276161263279%)" opacity="0.58"/><circle cx="69.9" cy="45.9" r="1" fill="#fff" opacity=".8"/><circle cx="40.2" cy="38.9" r="2.0" fill="hsl(139,75%,79.88086526962603%)" opacity="0.78"/><circle cx="57.3" cy="17.1" r="3.1" fill="hsl(229,75%,57.13226420957258%)" opacity="0.49"/><circle cx="54.0" cy="48.6" r="2.2" fill="hsl(327,75%,71.9976844838672%)" opacity="0.67"/><circle cx="68.9" cy="32.1" r="2.5" fill="hsl(270,75%,59.26824328012306%)" opacity="0.71"/><circle cx="21.4" cy="46.8" r="1.3" fill="hsl(96,75%,62.28926477580463%)" opacity="0.71"/><circle cx="21.4" cy="46.8" r="1" fill="#fff" opacity=".8"/><circle cx="47.3" cy="68.7" r="2.5" fill="hsl(13,75%,56.16118257106615%)" opacity="0.51"/><circle cx="55.2" cy="51.8" r="2.5" fill="hsl(334,75%,69.02189813526647%)" opacity="0.68"/><circle cx="51.1" cy="46.6" r="2.2" fill="hsl(328,75%,75.35114829408246%)" opacity="0.63"/><circle cx="32.3" cy="50.2" r="2.4" fill="hsl(72,75%,69.81928546790668%)" opacity="0.39"/><circle cx="37.2" cy="59.9" r="3.1" fill="hsl(40,75%,64.08739090342192%)" opacity="0.66"/><circle cx="37.2" cy="59.9" r="1" fill="#fff" opacity=".8"/><circle cx="60.3" cy="27.5" r="1.7" fill="hsl(250,75%,63.78722601681629%)" opacity="0.49"/><circle cx="69.6" cy="35.0" r="1.8" fill="hsl(277,75%,59.55452074887289%)" opacity="0.39"/><circle cx="18.2" cy="41.3" r="2.0" fill="hsl(109,75%,60.068866903386976%)" opacity="0.49"/><circle cx="29.0" cy="16.8" r="1.7" fill="hsl(168,75%,56.08371351289716%)" opacity="0.40"/><circle cx="33.2" cy="57.2" r="2.6" fill="hsl(54,75%,64.93604077532602%)" opacity="0.47"/><circle cx="33.2" cy="57.2" r="1" fill="#fff" opacity=".8"/><circle cx="51.9" cy="17.1" r="2.2" fill="hsl(218,75%,58.98009748214153%)" opacity="0.47"/><circle cx="61.5" cy="37.9" r="2.8" fill="hsl(280,75%,67.4552159031523%)" opacity="0.48"/><circle cx="48.9" cy="66.0" r="1.8" fill="hsl(9,75%,58.63102733212574%)" opacity="0.79"/><circle cx="29.9" cy="41.3" r="1.6" fill="hsl(109,75%,70.91566570157181%)" opacity="0.56"/><circle cx="28.5" cy="16.6" r="1.5" fill="hsl(168,75%,55.73747903547195%)" opacity="0.55"/><circle cx="28.5" cy="16.6" r="1" fill="#fff" opacity=".8"/><circle cx="51.1" cy="68.9" r="1.5" fill="hsl(6,75%,55.37012088024794%)" opacity="0.40"/><circle cx="62.5" cy="47.8" r="3.0" fill="hsl(310,75%,65.53414297544481%)" opacity="0.76"/><circle cx="40.6" cy="12.2" r="3.1" fill="hsl(193,75%,55.03512273579619%)" opacity="0.52"/><circle cx="56.0" cy="66.8" r="2.7" fill="hsl(355,75%,55.92590416152039%)" opacity="0.40"/><circle cx="34.0" cy="25.4" r="1.9" fill="hsl(167,75%,65.8652115929907%)" opacity="0.52"/><circle cx="34.0" cy="25.4" r="1" fill="#fff" opacity=".8"/><circle cx="46.3" cy="44.8" r="1.8" fill="hsl(349,75%,79.61981810179626%)" opacity="0.53"/><circle cx="55.3" cy="38.0" r="3.1" fill="hsl(275,75%,73.10147294544412%)" opacity="0.47"/><circle cx="26.3" cy="61.6" r="2.8" fill="hsl(61,75%,57.65717281749311%)" opacity="0.57"/><circle cx="64.8" cy="47.1" r="1.9" fill="hsl(306,75%,63.82477753690431%)" opacity="0.77"/><circle cx="50.7" cy="57.7" r="3.0" fill="hsl(358,75%,66.19475842878869%)" opacity="0.40"/><circle cx="50.7" cy="57.7" r="1" fill="#fff" opacity=".8"/><circle cx="20.0" cy="54.9" r="2.7" fill="hsl(80,75%,57.81012525546522%)" opacity="0.40"/><circle cx="52.7" cy="42.8" r="3.0" fill="hsl(302,75%,75.72974379841926%)" opacity="0.49"/><circle cx="43.5" cy="13.5" r="1.9" fill="hsl(199,75%,56.47930935765564%)" opacity="0.50"/><circle cx="67.9" cy="35.0" r="1.7" fill="hsl(276,75%,61.08011070974098%)" opacity="0.69"/><circle cx="37.2" cy="55.3" r="1.2" fill="hsl(46,75%,68.37985265274885%)" opacity="0.70"/><circle cx="37.2" cy="55.3" r="1" fill="#fff" opacity=".8"/><circle cx="65.7" cy="29.4" r="3.1" fill="hsl(262,75%,60.77644145048579%)" opacity="0.39"/><circle cx="46.2" cy="61.1" r="3.1" fill="hsl(14,75%,63.789574034628004%)" opacity="0.79"/><circle cx="31.8" cy="50.8" r="2.1" fill="hsl(71,75%,69.04246782412301%)" opacity="0.59"/><circle cx="56.6" cy="35.3" r="2.8" fill="hsl(266,75%,71.05415681443728%)" opacity="0.70"/><circle cx="56.2" cy="18.1" r="2.4" fill="hsl(228,75%,58.43138574832727%)" opacity="0.52"/><circle cx="56.2" cy="18.1" r="1" fill="#fff" opacity=".8"/><circle cx="35.9" cy="57.1" r="2.8" fill="hsl(47,75%,66.25016930359511%)" opacity="0.42"/><circle cx="52.9" cy="64.9" r="1.7" fill="hsl(360,75%,58.7545387832632%)" opacity="0.41"/><circle cx="66.9" cy="45.6" r="1.9" fill="hsl(301,75%,62.26851470302239%)" opacity="0.80"/><circle cx="67.2" cy="21.7" r="1.7" fill="hsl(250,75%,55.17354264094268%)" opacity="0.42"/><circle cx="62.4" cy="52.8" r="2.6" fill="hsl(323,75%,63.32021889121119%)" opacity="0.57"/><circle cx="62.4" cy="52.8" r="1" fill="#fff" opacity=".8"/><circle cx="46.0" cy="59.9" r="2.4" fill="hsl(14,75%,65.01654110964218%)" opacity="0.67"/><circle cx="43.6" cy="14.3" r="2.5" fill="hsl(199,75%,57.26257665752772%)" opacity="0.43"/><circle cx="53.4" cy="27.5" r="2.3" fill="hsl(235,75%,67.90809614108662%)" opacity="0.54"/><circle cx="42.9" cy="27.6" r="1.7" fill="hsl(195,75%,70.54680375858975%)" opacity="0.49"/><circle cx="60.8" cy="63.4" r="2.4" fill="hsl(343,75%,56.695541875045464%)" opacity="0.52"/><circle cx="60.8" cy="63.4" r="1" fill="#fff" opacity=".8"/><circle cx="19.2" cy="58.6" r="2.2" fill="hsl(75,75%,55.10750285072015%)" opacity="0.48"/><circle cx="53.1" cy="19.0" r="3.2" fill="hsl(223,75%,60.4356481586377%)" opacity="0.43"/><circle cx="15.9" cy="45.2" r="2.9" fill="hsl(102,75%,57.695854538978274%)" opacity="0.77"/><circle cx="60.8" cy="45.0" r="1.4" fill="hsl(303,75%,67.91077709102326%)" opacity="0.46"/><circle cx="67.7" cy="37.2" r="3.1" fill="hsl(281,75%,61.69581569121139%)" opacity="0.54"/><circle cx="67.7" cy="37.2" r="1" fill="#fff" opacity=".8"/><circle cx="58.2" cy="26.3" r="1.7" fill="hsl(244,75%,64.32843017713427%)" opacity="0.71"/><circle cx="54.4" cy="37.6" r="2.4" fill="hsl(272,75%,73.80187214266093%)" opacity="0.65"/><circle cx="47.9" cy="58.5" r="1.5" fill="hsl(7,75%,66.09183941345681%)" opacity="0.47"/><circle cx="43.2" cy="63.6" r="2.5" fill="hsl(22,75%,61.397948047201766%)" opacity="0.47"/><circle cx="62.2" cy="42.2" r="2.6" fill="hsl(294,75%,67.07273583738207%)" opacity="0.46"/><circle cx="62.2" cy="42.2" r="1" fill="#fff" opacity=".8"/><circle cx="38.4" cy="53.6" r="2.8" fill="hsl(44,75%,70.4182247984393%)" opacity="0.62"/><circle cx="54.0" cy="44.9" r="2.0" fill="hsl(311,75%,73.9809296744929%)" opacity="0.62"/><circle cx="37.4" cy="33.6" r="1.5" fill="hsl(158,75%,74.41114456696609%)" opacity="0.68"/><circle cx="29.6" cy="49.5" r="1.8" fill="hsl(79,75%,68.17877443124752%)" opacity="0.79"/><circle cx="34.9" cy="61.3" r="1.9" fill="hsl(44,75%,62.00603477054339%)" opacity="0.56"/><circle cx="34.9" cy="61.3" r="1" fill="#fff" opacity=".8"/><circle cx="64.6" cy="19.2" r="1.9" fill="hsl(243,75%,55.04806457854802%)" opacity="0.47"/><circle cx="42.0" cy="27.5" r="1.2" fill="hsl(191,75%,70.41035655782855%)" opacity="0.77"/><circle cx="18.8" cy="53.1" r="2.0" fill="hsl(84,75%,57.676030366816775%)" opacity="0.76"/><circle cx="31.1" cy="44.0" r="1.2" fill="hsl(97,75%,71.72050524847143%)" opacity="0.62"/><circle cx="25.0" cy="19.6" r="1.4" fill="hsl(158,75%,56.31147455709599%)" opacity="0.65"/><circle cx="25.0" cy="19.6" r="1" fill="#fff" opacity=".8"/><circle cx="28.5" cy="56.1" r="1.5" fill="hsl(66,75%,63.20124120919249%)" opacity="0.50"/><circle cx="14.1" cy="37.3" r="1.4" fill="hsl(117,75%,56.07871032968667%)" opacity="0.59"/><circle cx="54.4" cy="14.1" r="1.6" fill="hsl(221,75%,55.47457411319235%)" opacity="0.44"/><circle cx="73.0" cy="31.0" r="2.2" fill="hsl(271,75%,55.34959018301842%)" opacity="0.41"/><circle cx="61.7" cy="32.8" r="3.0" fill="hsl(265,75%,65.65564251751243%)" opacity="0.65"/><circle cx="61.7" cy="32.8" r="1" fill="#fff" opacity=".8"/><circle cx="50.0" cy="30.1" r="2.8" fill="hsl(229,75%,71.79686938092335%)" opacity="0.48"/><circle cx="20.2" cy="56.1" r="2.9" fill="hsl(78,75%,57.27237609421638%)" opacity="0.46"/><circle cx="48.0" cy="59.2" r="2.2" fill="hsl(8,75%,65.39133764452953%)" opacity="0.55"/><circle cx="55.5" cy="51.4" r="2.6" fill="hsl(332,75%,69.152744275551%)" opacity="0.76"/><circle cx="66.9" cy="46.6" r="2.7" fill="hsl(304,75%,62.08443304496519%)" opacity="0.40"/><circle cx="66.9" cy="46.6" r="1" fill="#fff" opacity=".8"/><circle cx="50.1" cy="31.9" r="2.4" fill="hsl(234,75%,73.32987590527%)" opacity="0.62"/><circle cx="31.6" cy="29.3" r="2.0" fill="hsl(154,75%,67.59281946964754%)" opacity="0.63"/><circle cx="21.2" cy="51.6" r="2.1" fill="hsl(85,75%,60.33937906520595%)" opacity="0.57"/><circle cx="68.5" cy="44.4" r="2.2" fill="hsl(298,75%,61.045734394143594%)" opacity="0.48"/><circle cx="46.4" cy="15.4" r="2.1" fill="hsl(205,75%,58.316158659906534%)" opacity="0.46"/><circle cx="46.4" cy="15.4" r="1" fill="#fff" opacity=".8"/><circle cx="33.1" cy="42.7" r="1.5" fill="hsl(101,75%,73.74963626128081%)" opacity="0.57"/><circle cx="61.7" cy="51.6" r="2.2" fill="hsl(321,75%,64.47871745865132%)" opacity="0.40"/><circle cx="37.5" cy="34.0" r="2.7" fill="hsl(157,75%,74.80209749834734%)" opacity="0.71"/><circle cx="35.5" cy="40.4" r="2.2" fill="hsl(114,75%,76.15499707769351%)" opacity="0.54"/><circle cx="55.7" cy="37.5" r="2.9" fill="hsl(274,75%,72.63947443153641%)" opacity="0.81"/><circle cx="55.7" cy="37.5" r="1" fill="#fff" opacity=".8"/><circle cx="40.8" cy="14.9" r="1.6" fill="hsl(193,75%,57.760373409846224%)" opacity="0.80"/><circle cx="13.4" cy="42.4" r="3.0" fill="hsl(107,75%,55.62284424483535%)" opacity="0.45"/><circle cx="51.2" cy="13.8" r="1.3" fill="hsl(215,75%,56.003780765103%)" opacity="0.53"/><circle cx="44.5" cy="28.9" r="3.0" fill="hsl(202,75%,71.84792378420539%)" opacity="0.50"/><circle cx="49.0" cy="30.3" r="2.2" fill="hsl(225,75%,72.37462197653876%)" opacity="0.77"/><circle cx="49.0" cy="30.3" r="1" fill="#fff" opacity=".8"/><circle cx="48.3" cy="55.8" r="2.2" fill="hsl(4,75%,68.72026599548595%)" opacity="0.52"/><circle cx="57.6" cy="44.0" r="1.5" fill="hsl(302,75%,71.08101394743133%)" opacity="0.78"/><circle cx="31.3" cy="16.2" r="1.5" fill="hsl(173,75%,56.5263476824614%)" opacity="0.72"/><circle cx="61.3" cy="55.1" r="2.5" fill="hsl(329,75%,62.68733180638373%)" opacity="0.54"/></g><ellipse cx="44" cy="41" rx="20" ry="19" fill="url(#glow)"/></svg>
<div class="t" style="left:332px;top:445.5px;font-size:22px;color:#2a2a2a">FX</div>
<svg style="left:0;top:0" width="400" height="870"><path d="M201.5 802 V825 M190 813.5 H213" stroke="#cfcfcf" stroke-width="1.5"/><rect x="399" y="488" width="3" height="34" rx="1.5" fill="#5a5a5a"/></svg>
<div class="a" style="left:405px;top:82px;width:1155px;height:783px;background:#131313"></div>
<svg style="left:0;top:0" width="1560" height="870"><rect x="404.7" y="114" width="1.2" height="390" fill="#222222"/><rect x="440.8" y="114" width="1.2" height="390" fill="#1a1a1a"/><rect x="476.9" y="114" width="1.2" height="390" fill="#1a1a1a"/><rect x="513.0" y="114" width="1.2" height="390" fill="#1a1a1a"/><rect x="549.1" y="114" width="1.2" height="390" fill="#222222"/><rect x="585.3" y="114" width="1.2" height="390" fill="#1a1a1a"/><rect x="621.4" y="114" width="1.2" height="390" fill="#1a1a1a"/><rect x="657.5" y="114" width="1.2" height="390" fill="#1a1a1a"/><rect x="693.6" y="114" width="1.2" height="390" fill="#222222"/><rect x="729.7" y="114" width="1.2" height="390" fill="#1a1a1a"/><rect x="765.8" y="114" width="1.2" height="390" fill="#1a1a1a"/><rect x="801.9" y="114" width="1.2" height="390" fill="#1a1a1a"/><rect x="838.0" y="114" width="1.2" height="390" fill="#222222"/><rect x="874.2" y="114" width="1.2" height="390" fill="#1a1a1a"/><rect x="910.3" y="114" width="1.2" height="390" fill="#1a1a1a"/><rect x="946.4" y="114" width="1.2" height="390" fill="#1a1a1a"/><rect x="982.5" y="114" width="1.2" height="390" fill="#222222"/><rect x="1018.6" y="114" width="1.2" height="390" fill="#1a1a1a"/><rect x="1054.7" y="114" width="1.2" height="390" fill="#1a1a1a"/><rect x="1090.8" y="114" width="1.2" height="390" fill="#1a1a1a"/><rect x="1127.0" y="114" width="1.2" height="390" fill="#222222"/><rect x="1163.1" y="114" width="1.2" height="390" fill="#1a1a1a"/><rect x="1199.2" y="114" width="1.2" height="390" fill="#1a1a1a"/><rect x="1235.3" y="114" width="1.2" height="390" fill="#1a1a1a"/><rect x="1271.4" y="114" width="1.2" height="390" fill="#222222"/><rect x="1307.5" y="114" width="1.2" height="390" fill="#1a1a1a"/><rect x="1343.6" y="114" width="1.2" height="390" fill="#1a1a1a"/><rect x="1379.7" y="114" width="1.2" height="390" fill="#1a1a1a"/><rect x="1415.8" y="114" width="1.2" height="390" fill="#222222"/><rect x="1452.0" y="114" width="1.2" height="390" fill="#1a1a1a"/><rect x="1488.1" y="114" width="1.2" height="390" fill="#1a1a1a"/><rect x="1524.2" y="114" width="1.2" height="390" fill="#1a1a1a"/></svg>
<svg style="left:0;top:0" width="1560" height="120"><rect x="405" y="82" width="1155" height="32" fill="#1c1c1c"/><rect x="404.6" y="82" width="1.4" height="33" fill="#6a6a6a"/><path d="M421.9 113.5 L423.3 104 L424.7 113.5 Z" fill="#5a5a5a"/><rect x="440.5" y="101" width="1.6" height="12.5" fill="#6a6a6a"/><path d="M458.0 113.5 L459.4 104 L460.8 113.5 Z" fill="#5a5a5a"/><rect x="476.6" y="101" width="1.6" height="12.5" fill="#6a6a6a"/><path d="M494.1 113.5 L495.5 104 L496.9 113.5 Z" fill="#5a5a5a"/><rect x="512.7" y="101" width="1.6" height="12.5" fill="#6a6a6a"/><path d="M530.2 113.5 L531.6 104 L533.0 113.5 Z" fill="#5a5a5a"/><rect x="549.0" y="82" width="1.4" height="33" fill="#6a6a6a"/><text x="554.9" y="95" font-size="13.5" font-weight="bold" fill="#a8a8a8" font-family="Liberation Sans">2</text><path d="M566.3 113.5 L567.7 104 L569.1 113.5 Z" fill="#5a5a5a"/><rect x="585.0" y="101" width="1.6" height="12.5" fill="#6a6a6a"/><path d="M602.4 113.5 L603.8 104 L605.2 113.5 Z" fill="#5a5a5a"/><rect x="621.1" y="101" width="1.6" height="12.5" fill="#6a6a6a"/><path d="M638.5 113.5 L639.9 104 L641.3 113.5 Z" fill="#5a5a5a"/><rect x="657.2" y="101" width="1.6" height="12.5" fill="#6a6a6a"/><path d="M674.6 113.5 L676.0 104 L677.4 113.5 Z" fill="#5a5a5a"/><rect x="693.5" y="82" width="1.4" height="33" fill="#6a6a6a"/><text x="699.3" y="95" font-size="13.5" font-weight="bold" fill="#a8a8a8" font-family="Liberation Sans">3</text><path d="M710.8 113.5 L712.2 104 L713.6 113.5 Z" fill="#5a5a5a"/><rect x="729.4" y="101" width="1.6" height="12.5" fill="#6a6a6a"/><path d="M746.9 113.5 L748.3 104 L749.7 113.5 Z" fill="#5a5a5a"/><rect x="765.5" y="101" width="1.6" height="12.5" fill="#6a6a6a"/><path d="M783.0 113.5 L784.4 104 L785.8 113.5 Z" fill="#5a5a5a"/><rect x="801.6" y="101" width="1.6" height="12.5" fill="#6a6a6a"/><path d="M819.1 113.5 L820.5 104 L821.9 113.5 Z" fill="#5a5a5a"/><rect x="837.9" y="82" width="1.4" height="33" fill="#6a6a6a"/><text x="843.8" y="95" font-size="13.5" font-weight="bold" fill="#a8a8a8" font-family="Liberation Sans">4</text><path d="M855.2 113.5 L856.6 104 L858.0 113.5 Z" fill="#5a5a5a"/><rect x="873.9" y="101" width="1.6" height="12.5" fill="#6a6a6a"/><path d="M891.3 113.5 L892.7 104 L894.1 113.5 Z" fill="#5a5a5a"/><rect x="910.0" y="101" width="1.6" height="12.5" fill="#6a6a6a"/><path d="M927.4 113.5 L928.8 104 L930.2 113.5 Z" fill="#5a5a5a"/><rect x="946.1" y="101" width="1.6" height="12.5" fill="#6a6a6a"/><path d="M963.5 113.5 L964.9 104 L966.3 113.5 Z" fill="#5a5a5a"/><rect x="982.4" y="82" width="1.4" height="33" fill="#6a6a6a"/><text x="988.2" y="95" font-size="13.5" font-weight="bold" fill="#a8a8a8" font-family="Liberation Sans">5</text><path d="M999.7 113.5 L1001.1 104 L1002.5 113.5 Z" fill="#5a5a5a"/><rect x="1018.3" y="101" width="1.6" height="12.5" fill="#6a6a6a"/><path d="M1035.8 113.5 L1037.2 104 L1038.6 113.5 Z" fill="#5a5a5a"/><rect x="1054.4" y="101" width="1.6" height="12.5" fill="#6a6a6a"/><path d="M1071.9 113.5 L1073.3 104 L1074.7 113.5 Z" fill="#5a5a5a"/><rect x="1090.5" y="101" width="1.6" height="12.5" fill="#6a6a6a"/><path d="M1108.0 113.5 L1109.4 104 L1110.8 113.5 Z" fill="#5a5a5a"/><rect x="1126.9" y="82" width="1.4" height="33" fill="#6a6a6a"/><text x="1132.7" y="95" font-size="13.5" font-weight="bold" fill="#a8a8a8" font-family="Liberation Sans">6</text><path d="M1144.1 113.5 L1145.5 104 L1146.9 113.5 Z" fill="#5a5a5a"/><rect x="1162.8" y="101" width="1.6" height="12.5" fill="#6a6a6a"/><path d="M1180.2 113.5 L1181.6 104 L1183.0 113.5 Z" fill="#5a5a5a"/><rect x="1198.9" y="101" width="1.6" height="12.5" fill="#6a6a6a"/><path d="M1216.3 113.5 L1217.7 104 L1219.1 113.5 Z" fill="#5a5a5a"/><rect x="1235.0" y="101" width="1.6" height="12.5" fill="#6a6a6a"/><path d="M1252.4 113.5 L1253.8 104 L1255.2 113.5 Z" fill="#5a5a5a"/><rect x="1271.3" y="82" width="1.4" height="33" fill="#6a6a6a"/><text x="1277.1" y="95" font-size="13.5" font-weight="bold" fill="#a8a8a8" font-family="Liberation Sans">7</text><path d="M1288.6 113.5 L1290.0 104 L1291.4 113.5 Z" fill="#5a5a5a"/><rect x="1307.2" y="101" width="1.6" height="12.5" fill="#6a6a6a"/><path d="M1324.7 113.5 L1326.1 104 L1327.5 113.5 Z" fill="#5a5a5a"/><rect x="1343.3" y="101" width="1.6" height="12.5" fill="#6a6a6a"/><path d="M1360.8 113.5 L1362.2 104 L1363.6 113.5 Z" fill="#5a5a5a"/><rect x="1379.4" y="101" width="1.6" height="12.5" fill="#6a6a6a"/><path d="M1396.9 113.5 L1398.3 104 L1399.7 113.5 Z" fill="#5a5a5a"/><rect x="1415.8" y="82" width="1.4" height="33" fill="#6a6a6a"/><text x="1421.5" y="95" font-size="13.5" font-weight="bold" fill="#a8a8a8" font-family="Liberation Sans">8</text><path d="M1433.0 113.5 L1434.4 104 L1435.8 113.5 Z" fill="#5a5a5a"/><rect x="1451.7" y="101" width="1.6" height="12.5" fill="#6a6a6a"/><path d="M1469.1 113.5 L1470.5 104 L1471.9 113.5 Z" fill="#5a5a5a"/><rect x="1487.8" y="101" width="1.6" height="12.5" fill="#6a6a6a"/><path d="M1505.2 113.5 L1506.6 104 L1508.0 113.5 Z" fill="#5a5a5a"/><rect x="1523.9" y="101" width="1.6" height="12.5" fill="#6a6a6a"/><rect x="1527.5" y="82" width="32.5" height="33" fill="#242424"/><path d="M1544.6 89 V106 M1536 97.3 H1553" stroke="#d0d0d0" stroke-width="1.5"/></svg>
<div class="a" style="left:407px;top:117px;width:1153px;height:89px;background:#15631f;border-radius:3px;box-shadow:0 0 3px 2px #050505"></div>
<div class="t" style="left:414.5px;top:126.5px;font-size:12.5px;letter-spacing:0.35px;color:#3cba4c">Advanced Machines</div>
<div class="a" style="left:407px;top:215px;width:1153px;height:89px;background:#15631f;border-radius:3px;box-shadow:0 0 3px 2px #050505"></div>
<div class="t" style="left:414.5px;top:224.5px;font-size:12.5px;letter-spacing:0.35px;color:#3cba4c">Deep Thump Bass</div>
<div class="a" style="left:695px;top:313px;width:865px;height:89px;background:#15631f;border-radius:3px;box-shadow:0 0 3px 2px #050505"></div>
<div class="t" style="left:702.5px;top:322.5px;font-size:12.5px;letter-spacing:0.35px;color:#3cba4c">Guzheng</div>
<svg style="left:0;top:0" width="1560" height="520"><clipPath id="c1"><rect x="407" y="117" width="1153" height="89"/></clipPath><g clip-path="url(#c1)" fill="#30dc48"><rect x="333.0" y="186.5" width="8" height="3"/><rect x="351.0" y="159.5" width="8" height="3"/><rect x="369.0" y="176.5" width="8" height="3"/><rect x="369.0" y="186.5" width="8" height="3"/><rect x="386.0" y="181.5" width="8" height="3"/><rect x="405.2" y="186.5" width="8" height="3"/><rect x="423.2" y="159.5" width="8" height="3"/><rect x="441.2" y="176.5" width="8" height="3"/><rect x="441.2" y="186.5" width="8" height="3"/><rect x="458.2" y="181.5" width="8" height="3"/><rect x="477.4" y="186.5" width="8" height="3"/><rect x="495.4" y="159.5" width="8" height="3"/><rect x="513.4" y="176.5" width="8" height="3"/><rect x="513.4" y="186.5" width="8" height="3"/><rect x="530.4" y="181.5" width="8" height="3"/><rect x="549.6" y="186.5" width="8" height="3"/><rect x="567.6" y="159.5" width="8" height="3"/><rect x="585.6" y="176.5" width="8" height="3"/><rect x="585.6" y="186.5" width="8" height="3"/><rect x="602.6" y="181.5" width="8" height="3"/><rect x="621.9" y="186.5" width="8" height="3"/><rect x="639.9" y="159.5" width="8" height="3"/><rect x="657.9" y="176.5" width="8" height="3"/><rect x="657.9" y="186.5" width="8" height="3"/><rect x="674.9" y="181.5" width="8" height="3"/><rect x="694.1" y="186.5" width="8" height="3"/><rect x="712.1" y="159.5" width="8" height="3"/><rect x="730.1" y="176.5" width="8" height="3"/><rect x="730.1" y="186.5" width="8" height="3"/><rect x="747.1" y="181.5" width="8" height="3"/><rect x="766.3" y="186.5" width="8" height="3"/><rect x="784.3" y="159.5" width="8" height="3"/><rect x="802.3" y="176.5" width="8" height="3"/><rect x="802.3" y="186.5" width="8" height="3"/><rect x="819.3" y="181.5" width="8" height="3"/><rect x="838.5" y="186.5" width="8" height="3"/><rect x="856.5" y="159.5" width="8" height="3"/><rect x="874.5" y="176.5" width="8" height="3"/><rect x="874.5" y="186.5" width="8" height="3"/><rect x="891.5" y="181.5" width="8" height="3"/><rect x="910.8" y="186.5" width="8" height="3"/><rect x="928.8" y="159.5" width="8" height="3"/><rect x="946.8" y="176.5" width="8" height="3"/><rect x="946.8" y="186.5" width="8" height="3"/><rect x="963.8" y="181.5" width="8" height="3"/><rect x="983.0" y="186.5" width="8" height="3"/><rect x="1001.0" y="159.5" width="8" height="3"/><rect x="1019.0" y="176.5" width="8" height="3"/><rect x="1019.0" y="186.5" width="8" height="3"/><rect x="1036.0" y="181.5" width="8" height="3"/><rect x="1055.2" y="186.5" width="8" height="3"/><rect x="1073.2" y="159.5" width="8" height="3"/><rect x="1091.2" y="176.5" width="8" height="3"/><rect x="1091.2" y="186.5" width="8" height="3"/><rect x="1108.2" y="181.5" width="8" height="3"/><rect x="1127.5" y="186.5" width="8" height="3"/><rect x="1145.5" y="159.5" width="8" height="3"/><rect x="1163.5" y="176.5" width="8" height="3"/><rect x="1163.5" y="186.5" width="8" height="3"/><rect x="1180.5" y="181.5" width="8" height="3"/><rect x="1199.7" y="186.5" width="8" height="3"/><rect x="1217.7" y="159.5" width="8" height="3"/><rect x="1235.7" y="176.5" width="8" height="3"/><rect x="1235.7" y="186.5" width="8" height="3"/><rect x="1252.7" y="181.5" width="8" height="3"/><rect x="1271.9" y="186.5" width="8" height="3"/><rect x="1289.9" y="159.5" width="8" height="3"/><rect x="1307.9" y="176.5" width="8" height="3"/><rect x="1307.9" y="186.5" width="8" height="3"/><rect x="1324.9" y="181.5" width="8" height="3"/><rect x="1344.1" y="186.5" width="8" height="3"/><rect x="1362.1" y="159.5" width="8" height="3"/><rect x="1380.1" y="176.5" width="8" height="3"/><rect x="1380.1" y="186.5" width="8" height="3"/><rect x="1397.1" y="181.5" width="8" height="3"/><rect x="1416.3" y="186.5" width="8" height="3"/><rect x="1434.3" y="159.5" width="8" height="3"/><rect x="1452.3" y="176.5" width="8" height="3"/><rect x="1452.3" y="186.5" width="8" height="3"/><rect x="1469.3" y="181.5" width="8" height="3"/><rect x="1488.6" y="186.5" width="8" height="3"/><rect x="1506.6" y="159.5" width="8" height="3"/><rect x="1524.6" y="176.5" width="8" height="3"/><rect x="1524.6" y="186.5" width="8" height="3"/><rect x="1541.6" y="181.5" width="8" height="3"/><rect x="1560.8" y="186.5" width="8" height="3"/><rect x="1578.8" y="159.5" width="8" height="3"/><rect x="1596.8" y="176.5" width="8" height="3"/><rect x="1596.8" y="186.5" width="8" height="3"/><rect x="1613.8" y="181.5" width="8" height="3"/></g><clipPath id="c2"><rect x="407" y="215" width="1153" height="89"/></clipPath><g clip-path="url(#c2)" fill="#30dc48"><rect x="296.8" y="266.0" width="32" height="3"/><rect x="331.8" y="266.0" width="32" height="3"/><rect x="368.8" y="280.5" width="32" height="3"/><rect x="403.8" y="280.5" width="32" height="3"/><rect x="441.2" y="266.0" width="32" height="3"/><rect x="476.2" y="266.0" width="32" height="3"/><rect x="513.2" y="280.5" width="32" height="3"/><rect x="548.2" y="280.5" width="32" height="3"/><rect x="585.6" y="266.0" width="32" height="3"/><rect x="620.6" y="266.0" width="32" height="3"/><rect x="657.6" y="280.5" width="32" height="3"/><rect x="692.6" y="280.5" width="32" height="3"/><rect x="730.1" y="266.0" width="32" height="3"/><rect x="765.1" y="266.0" width="32" height="3"/><rect x="802.1" y="280.5" width="32" height="3"/><rect x="837.1" y="280.5" width="32" height="3"/><rect x="874.5" y="266.0" width="32" height="3"/><rect x="909.5" y="266.0" width="32" height="3"/><rect x="946.5" y="280.5" width="32" height="3"/><rect x="981.5" y="280.5" width="32" height="3"/><rect x="1019.0" y="266.0" width="32" height="3"/><rect x="1054.0" y="266.0" width="32" height="3"/><rect x="1091.0" y="280.5" width="32" height="3"/><rect x="1126.0" y="280.5" width="32" height="3"/><rect x="1163.5" y="266.0" width="32" height="3"/><rect x="1198.5" y="266.0" width="32" height="3"/><rect x="1235.5" y="280.5" width="32" height="3"/><rect x="1270.5" y="280.5" width="32" height="3"/><rect x="1307.9" y="266.0" width="32" height="3"/><rect x="1342.9" y="266.0" width="32" height="3"/><rect x="1379.9" y="280.5" width="32" height="3"/><rect x="1414.9" y="280.5" width="32" height="3"/><rect x="1452.3" y="266.0" width="32" height="3"/><rect x="1487.3" y="266.0" width="32" height="3"/><rect x="1524.3" y="280.5" width="32" height="3"/><rect x="1559.3" y="280.5" width="32" height="3"/><rect x="1596.8" y="266.0" width="32" height="3"/><rect x="1631.8" y="266.0" width="32" height="3"/><rect x="1668.8" y="280.5" width="32" height="3"/><rect x="1703.8" y="280.5" width="32" height="3"/></g><g fill="#30dc48"><rect x="1064" y="346.5" width="496" height="3"/><rect x="760" y="351.0" width="800" height="3"/><rect x="1051" y="355.5" width="509" height="3"/><rect x="1003" y="360.0" width="557" height="3"/><rect x="788" y="364.5" width="772" height="3"/><rect x="995" y="369.0" width="565" height="3"/><rect x="817" y="373.5" width="87" height="3"/><rect x="1131" y="373.5" width="429" height="3"/><rect x="1022" y="378.0" width="538" height="3"/><rect x="725" y="382.5" width="835" height="3"/></g></svg>
<div class="a" style="left:406px;top:412px;width:144px;height:89px;background:#fafafa;border-radius:7px"></div>
<div class="a" style="left:414px;top:412.5px;width:127px;height:88px;background:#e8a8e0"></div>
<div class="a" style="left:414px;top:414px;width:127px;height:85px;background:#c03aa6"></div>
<svg style="left:0;top:0" width="560" height="520"><rect x="408" y="441" width="3" height="29" rx="1.5" fill="#7a7a7a"/><rect x="544.5" y="441" width="3" height="29" rx="1.5" fill="#7a7a7a"/><path d="M448.5 485 V443.7 H536.3 V485" stroke="#d868c8" stroke-width="1.1" fill="none"/><path d="M414 480 L448.5 465.3  C452.2 462.6 464.9 446.6 470.5 448.8 C476.1 451.0 477.5 478.0 481.8 478.3 C486.1 478.6 491.6 450.5 496.5 450.6 C501.4 450.7 505.9 479.4 511.2 479.0 C516.5 478.6 524.3 449.5 528.5 448.0 C532.7 446.5 535.2 466.3 536.5 470.0" stroke="#e27ada" stroke-width="1.3" fill="none"/><path d="M414 482.5 L448.5 473  C451.1 469.2 457.2 449.2 464.0 450.0 C470.8 450.8 482.0 477.7 489.0 478.0 C496.0 478.3 500.7 452.0 506.0 452.0 C511.3 452.0 516.0 477.5 521.0 478.0 C526.0 478.5 533.5 458.8 536.0 455.0" stroke="#e27ada" stroke-width="1.3" fill="none"/></svg>
<div class="t" style="left:415px;top:422px;font-size:11px;color:#f0b0e8">FX</div>
<svg style="left:0;top:0" width="560" height="520"><defs><linearGradient id="tabg" x1="0" y1="0" x2="0" y2="1"><stop offset="0" stop-color="#2a2a2a"/><stop offset="1" stop-color="#3a3a3a"/></linearGradient></defs><path d="M403 82.5 H420 V97 L405.5 112 L403 112 Z" fill="url(#tabg)"/><path d="M403 82.8 H420 V97 L405 112.5" stroke="#b4b4b4" stroke-width="1.3" fill="none"/><rect x="421" y="98" width="3" height="16" fill="#161616" opacity=".8"/><text x="409.6" y="95.3" font-size="12" font-weight="bold" fill="#8a8a8a" font-family="Liberation Sans">1</text><rect x="404" y="112" width="2" height="395" fill="#d8d8d8"/></svg>
<div class="a" style="left:229px;top:353px;width:493px;height:40px;background:#0c0c0c;border-radius:8px"></div>
<svg style="left:0;top:0" width="760" height="420"><path d="M470 392 L478 401 L486 392 Z" fill="#0c0c0c"/><rect x="295" y="353" width="1" height="40" fill="#2a2a2a"/><rect x="375" y="353" width="1" height="40" fill="#2a2a2a"/><rect x="466" y="353" width="1" height="40" fill="#2a2a2a"/><rect x="544" y="353" width="1" height="40" fill="#2a2a2a"/><rect x="619" y="353" width="1" height="40" fill="#2a2a2a"/></svg>
<div class="t" style="left:249px;top:366.5px;font-size:17.6px;color:#ececec">Cut</div>
<div class="t" style="left:315px;top:366.5px;font-size:17.6px;color:#ececec">Copy</div>
<div class="t" style="left:396px;top:366.5px;font-size:17.6px;color:#ececec">Delete</div>
<div class="t" style="left:486px;top:366.5px;font-size:17.6px;color:#ececec">Loop</div>
<div class="t" style="left:565px;top:366.5px;font-size:17.6px;color:#ececec">Split</div>
<div class="t" style="left:639px;top:366.5px;font-size:17.6px;color:#ececec">Rename</div>
<div class="a" style="left:0;top:865px;width:1560px;height:305px;background:#262828"></div>
<div class="a" style="left:8px;top:873px;width:600px;height:287px;background:#1c1c1c"></div>
<div class="a" style="left:8px;top:912px;width:600px;height:7px;background:#212121"></div>
<div class="a" style="left:64px;top:873px;width:7px;height:39px;background:#191919"></div>
<div class="a" style="left:544px;top:873px;width:7px;height:39px;background:#191919"></div>
<div class="t" style="left:290px;top:886.8px;font-size:15px;font-weight:bold;color:#bdbdbd">Filter</div>
<svg style="left:0;top:860px" width="620" height="310"><rect x="163" y="77" width="1" height="197" fill="#262626"/><rect x="452" y="77" width="1" height="197" fill="#262626"/><rect x="306" y="77" width="1.5" height="197" fill="#3a3a3a"/><rect x="56" y="121" width="504" height="1" fill="#262626"/><rect x="56" y="179" width="504" height="1" fill="#262626"/><rect x="56" y="234.5" width="504" height="1" fill="#262626"/><rect x="8" y="284" width="600" height="16" fill="#1e1e1e"/><g transform="translate(37,34)" stroke="#9c9c9c" stroke-width="1.7" fill="none" stroke-linejoin="round"><path d="M-12 -6.7 L4.1 -6.5 L7.6 3.5 L-8.2 7.3 Z"/><path d="M-5.6 -9.3 Q3 -13.5 9.8 -7"/><path d="M11.2 2.5 Q9 10.5 -0.5 10.6 Q-3.5 10.5 -5 9.5"/><circle cx="11.6" cy="-2.8" r="2" fill="#9c9c9c" stroke="none"/><path d="M-5 -3.5 L-1.5 -1.5 L-4.5 0.5 Z" fill="#9c9c9c" stroke="none"/></g><g stroke="#a8a8a8" stroke-width="1.5" fill="none"><rect x="568.5" y="892.5" width="16" height="11" transform="translate(0,-860)"/><path d="M572 32 V28 A4.5 4.5 0 0 1 581 26.5"/></g></svg>
<div class="t" style="left:288px;top:1141.5px;font-size:13.5px;letter-spacing:0.8px;color:#3a3a3a">Cutoff</div>
<div class="t" style="left:24px;top:1040px;font-size:15px;letter-spacing:0.5px;color:#363636;transform:translate(-50%,-50%) rotate(-90deg)">Resonance</div>
<svg style="left:600px;top:860px" width="360" height="310"><path d="M168 11 H192 M168 15 H192 M168 19 H192" stroke="#3a3a3a" stroke-width="1"/><rect x="21" y="32" width="69" height="270" rx="34.5" fill="#1c1c1c" stroke="#2a2a2a" stroke-width="2"/><path d="M28 103 H83 M28 230 H83" stroke="#2a2a2a" stroke-width="1"/><rect x="270" y="32" width="70" height="270" rx="35" fill="#1c1c1c" stroke="#2a2a2a" stroke-width="2"/><path d="M277 103 H333 M277 230 H333" stroke="#2a2a2a" stroke-width="1"/><rect x="104.5" y="37" width="152" height="47" rx="2" fill="#252626" stroke="#2e2e2e" stroke-width="1"/><rect x="104" y="84" width="152" height="216" fill="#222222"/><rect x="104" y="97" width="152" height="59" fill="#1b1b1b"/><rect x="104" y="167" width="152" height="61" fill="#1b1b1b"/><rect x="104" y="240" width="152" height="57" fill="#1b1b1b"/><path d="M40 178 H42.4 V155.5 Q42.4 155 43 155 H48 Q48.6 155 48.6 155.5 V177.5 Q48.6 178 49.2 178 H52.3 Q52.9 178 52.9 177.5 V155.5 Q52.9 155 53.5 155 H58.4 Q59 155 59 155.5 V177.5 Q59 178 59.6 178 H62.7 Q63.3 178 63.3 177.5 V155.5 Q63.3 155 63.9 155 H68.9 Q69.5 155 69.5 155.5 V178 H72" stroke="#959595" stroke-width="1.3" fill="none"/><path d="M287.4 167.4 L289.5 156 L293 152.8 L299 152.8 L302.5 156 L304.5 162 L305 172 L308 175.5 L310.5 180 L315.5 180 L318.5 173.5 L322 171 L322.5 166.5" stroke="#8c8c8c" stroke-width="1.5" fill="none" stroke-linejoin="round"/><path d="M164 126.7 L190.5 113.7 V140.4 Z" stroke="#8e8e8e" stroke-width="1.5" fill="none" stroke-linejoin="round"/><circle cx="180" cy="197.5" r="19" stroke="#8e8e8e" stroke-width="1.6" fill="none"/><circle cx="180" cy="197.5" r="4.5" fill="#8e8e8e"/><circle cx="180" cy="197.5" r="1.5" fill="#1b1b1b"/><path d="M199 182 L194 203 L188 206" stroke="#8e8e8e" stroke-width="1.5" fill="none"/><rect x="168.5" y="256" width="25" height="25" stroke="#8e8e8e" stroke-width="1.5" fill="none"/></svg>
<div class="t" style="left:760px;top:912px;font-size:15px;font-weight:bold;letter-spacing:-0.3px;transform:scaleX(0.85);transform-origin:left;color:#2b2d2d">RESET</div>
<div class="a" style="left:954px;top:874px;width:598px;height:286px;background:#1c1c1c"></div>
<div class="a" style="left:954px;top:912px;width:598px;height:7px;background:#212121"></div>
<div class="a" style="left:1017px;top:874px;width:6px;height:38px;background:#191919"></div>
<div class="a" style="left:1488px;top:874px;width:6px;height:38px;background:#191919"></div>
<div class="t" style="left:1223px;top:886.8px;font-size:14.6px;font-weight:bold;color:#bdbdbd">Repeater</div>
<svg style="left:940px;top:860px" width="620" height="310"><rect x="104" y="75" width="1.2" height="210" fill="#232323"/><rect x="191" y="75" width="1.2" height="210" fill="#232323"/><rect x="272" y="75" width="1.2" height="210" fill="#232323"/><rect x="352" y="75" width="1.2" height="210" fill="#232323"/><rect x="439" y="75" width="1.2" height="210" fill="#232323"/><rect x="519" y="75" width="1.2" height="210" fill="#232323"/><rect x="14" y="284" width="598" height="16" fill="#1e1e1e"/><g stroke="#a8a8a8" stroke-width="1.5" fill="none"><rect x="36.5" y="32.5" width="16" height="11"/><path d="M40 32 V28 A4.5 4.5 0 0 1 49 26.5"/></g><g transform="translate(582,34)" stroke="#9c9c9c" stroke-width="1.7" fill="none" stroke-linejoin="round"><path d="M-12 -6.7 L4.1 -6.5 L7.6 3.5 L-8.2 7.3 Z"/><path d="M-5.6 -9.3 Q3 -13.5 9.8 -7"/><path d="M11.2 2.5 Q9 10.5 -0.5 10.6 Q-3.5 10.5 -5 9.5"/><circle cx="11.6" cy="-2.8" r="2" fill="#9c9c9c" stroke="none"/><path d="M-5 -3.5 L-1.5 -1.5 L-4.5 0.5 Z" fill="#9c9c9c" stroke="none"/></g></svg>
<div class="t" style="left:1237px;top:1141.5px;font-size:13.5px;letter-spacing:0.8px;color:#3a3a3a">Rate</div>
<div class="t" style="left:1537.5px;top:1039px;font-size:15px;letter-spacing:1px;color:#363636;transform:translate(-50%,-50%) rotate(-90deg)">Mix</div>
</body></html>
